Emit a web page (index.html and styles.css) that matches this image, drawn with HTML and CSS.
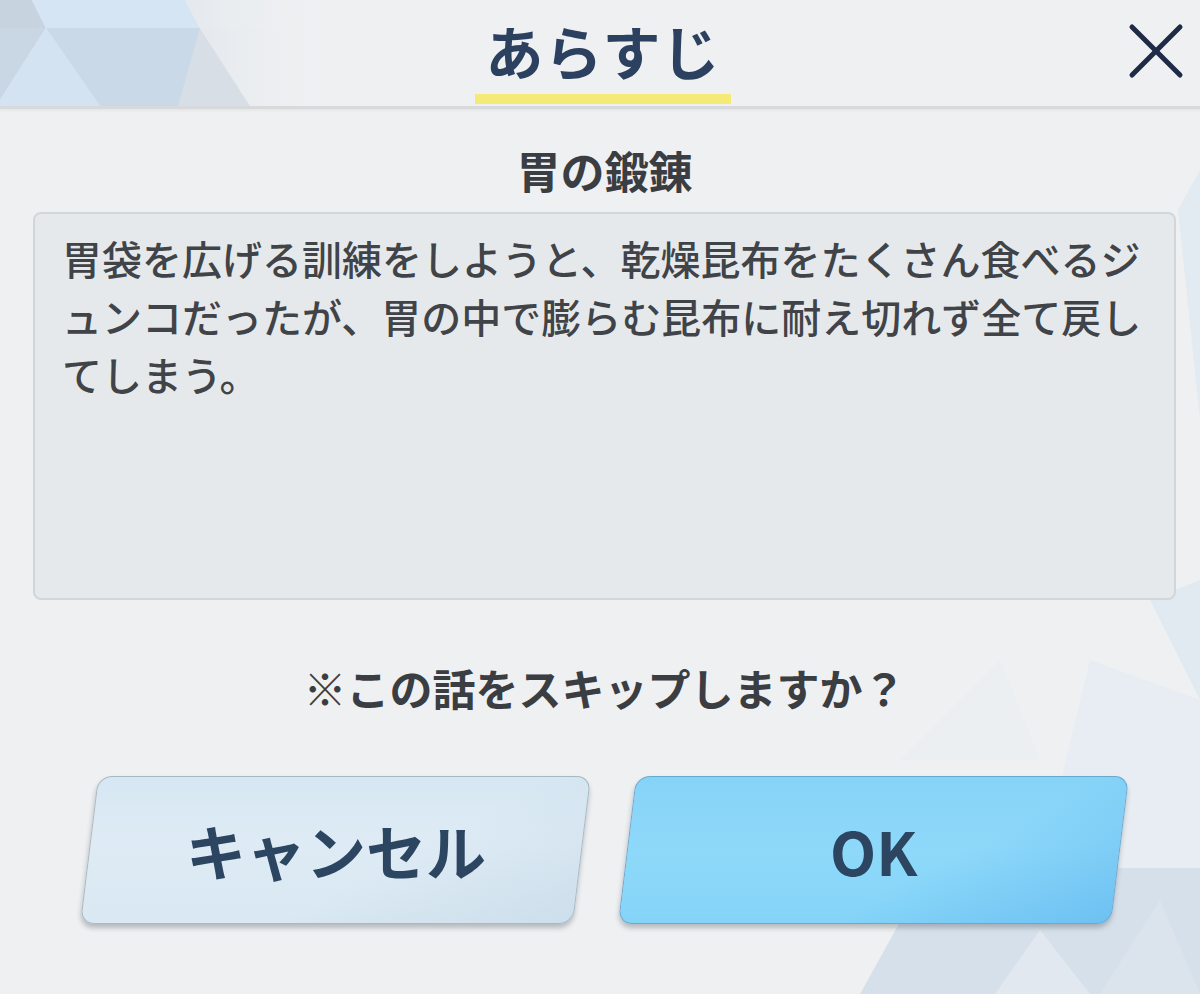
FILE: index.html
```html
<!DOCTYPE html>
<html lang="ja">
<head>
  <meta charset="utf-8">
  <link rel="stylesheet" href="styles.css">
</head>
<body>
  <!-- Faceted backdrop, sits under everything -->
  <svg class="backdrop" xmlns="http://www.w3.org/2000/svg" viewBox="0 0 1200 994" preserveAspectRatio="none">
    <defs>
      <linearGradient id="fade" x1="0" y1="0" x2="1" y2="0">
        <stop offset="0" stop-color="#e4e9ee"/>
        <stop offset="1" stop-color="#eef0f2" stop-opacity="0"/>
      </linearGradient>
    </defs>
    <!-- header facets, top left -->
    <polygon points="0,0 32,0 46,28 0,28" fill="#c7d4e0"/>
    <polygon points="32,0 185,0 200,28 46,28" fill="#d5e5f3"/>
    <polygon points="185,0 330,0 330,28 200,28" fill="url(#fade)"/>
    <polygon points="0,28 46,28 0,100" fill="#c9d7e4"/>
    <polygon points="46,28 100,106 0,106 0,100" fill="#d3e3f2"/>
    <polygon points="46,28 200,28 200,106 100,106" fill="#c9d9e8"/>
    <polygon points="200,28 250,106 178,106" fill="#d8dee5"/>
    <polygon points="200,28 330,28 330,106 250,106" fill="url(#fade)"/>
    <!-- faint facets, right side -->
    <polygon points="1178,210 1200,170 1200,420" fill="#e3ebf2"/>
    <polygon points="1150,600 1200,580 1200,700" fill="#e2eaf1"/>
    <polygon points="1090,660 1200,700 1200,868 1040,868" fill="#e7edf2"/>
    <polygon points="900,760 1000,660 1040,760" fill="#ebeff2"/>
    <polygon points="860,994 930,868 1200,868 1200,994" fill="#d6e0ea"/>
    <polygon points="995,994 1040,930 1090,994" fill="#e1e8ef"/>
    <polygon points="1100,994 1160,900 1200,994" fill="#dbe4ed"/>
  </svg>

  <header class="top-bar">
    <div class="tab">
      <h1 class="tab-title">あらすじ</h1>
      <span class="tab-mark"></span>
    </div>
    <button class="close-btn" title="閉じる">
      <svg xmlns="http://www.w3.org/2000/svg" viewBox="0 0 56 56" fill="none" stroke="#1f2b46" stroke-width="5" stroke-linecap="round"><path d="M4 4l48 48"/><path d="M52 4L4 52"/></svg>
    </button>
  </header>

  <main class="dialog">
    <h2 class="episode-title">胃の鍛錬</h2>
    <div class="synopsis">胃袋を広げる訓練をしようと、乾燥昆布をたくさん食べるジ<br>ュンコだったが、胃の中で膨らむ昆布に耐え切れず全て戻し<br>てしまう。</div>
    <p class="confirm">※この話をスキップしますか？</p>
    <div class="actions">
      <button class="btn btn-cancel"><span>キャンセル</span></button>
      <button class="btn btn-ok"><span>OK</span></button>
    </div>
  </main>
</body>
</html>
```

FILE: styles.css
```css
* { box-sizing: border-box; }
html, body {
  height: 100%;
}
body {
  margin: 0;
  background: #eef0f2;
  font-family: "Noto Sans CJK JP", "Noto Sans", sans-serif;
  color: #3b3e42;
  position: relative;
  overflow: hidden;
}
.backdrop {
  position: absolute; /* decoration under the content */
  left: 0;
  top: 0;
  width: 1200px;
  height: 994px;
  z-index: 0;
}

/* Header with the tab title and close cross */
.top-bar {
  position: relative;
  z-index: 1;
  height: 109px;
  display: grid;
  grid-template-columns: 1fr auto 1fr;
  align-items: start;
  border-bottom: 3px solid #d7d9db;
  box-shadow: 0 2px 2px rgba(0, 0, 0, 0.04);
}
.tab {
  grid-column: 2;
  width: 256px;
  margin-left: 6px;
  padding-top: 18px;
  display: flex;
  flex-direction: column;
  align-items: center;
}
.tab-title {
  margin: 0;
  font-size: 58px;
  line-height: 64px;
  font-weight: 700;
  color: #2c405f;
  letter-spacing: 1px;
}
.tab-mark {
  display: block;
  width: 100%;
  height: 10px;
  margin-top: 12px;
  background: #f6ea76;
}
.close-btn {
  grid-column: 3;
  justify-self: end;
  margin: 23px 16px 0 0;
  width: 56px;
  height: 56px;
  padding: 0;
  border: none;
  background: none;
  cursor: pointer;
}
.close-btn svg {
  width: 56px;
  height: 56px;
  display: block;
}

/* Dialog body */
.dialog {
  position: relative;
  z-index: 1;
  padding: 0 24px 0 33px;
  display: flex;
  flex-direction: column;
  align-items: center;
}
.episode-title {
  margin: 38px 0 0;
  font-size: 44px;
  line-height: 46px;
  font-weight: 700;
  color: #3a3d41;
}
.synopsis {
  align-self: stretch;
  margin-top: 19px;
  height: 388px;
  padding: 15px 12px 0 27px;
  background: #e6e9eb;
  border: 2px solid #d0d6db;
  border-radius: 8px;
  font-size: 40px;
  line-height: 58px;
  font-weight: 500;
  color: #404347;
  white-space: nowrap;
}
.confirm {
  margin: 64px 0 0;
  font-size: 43px;
  line-height: 46px;
  font-weight: 700;
  color: #3a3d41;
}
.actions {
  margin-top: 66px;
  display: flex;
  gap: 45px;
}
.btn {
  width: 493px;
  height: 148px;
  padding: 0;
  border: 1px solid #aab8c2;
  border-radius: 14px;
  transform: skewX(-7deg);
  box-shadow: 0 4px 5px rgba(40, 50, 60, 0.28);
  font-family: inherit;
  font-size: 60px;
  font-weight: 700;
  color: #2c4560;
  cursor: pointer;
  display: flex;
  align-items: center;
  justify-content: center;
}
.btn span {
  display: block;
  transform: skewX(7deg);
  line-height: 1;
}
.btn-cancel {
  background:
    linear-gradient(150deg, rgba(255,255,255,0) 60%, rgba(190,212,228,0.45) 100%),
    linear-gradient(180deg, #d6e7f3 0%, #deebf5 45%, #d9e8f2 100%);
}
.btn-ok {
  border-color: #6aa9cf;
  background:
    linear-gradient(150deg, rgba(255,255,255,0) 62%, rgba(100,185,240,0.7) 100%),
    linear-gradient(180deg, #86d3f8 0%, #8ed9fa 50%, #85d4f8 100%);
}
```
